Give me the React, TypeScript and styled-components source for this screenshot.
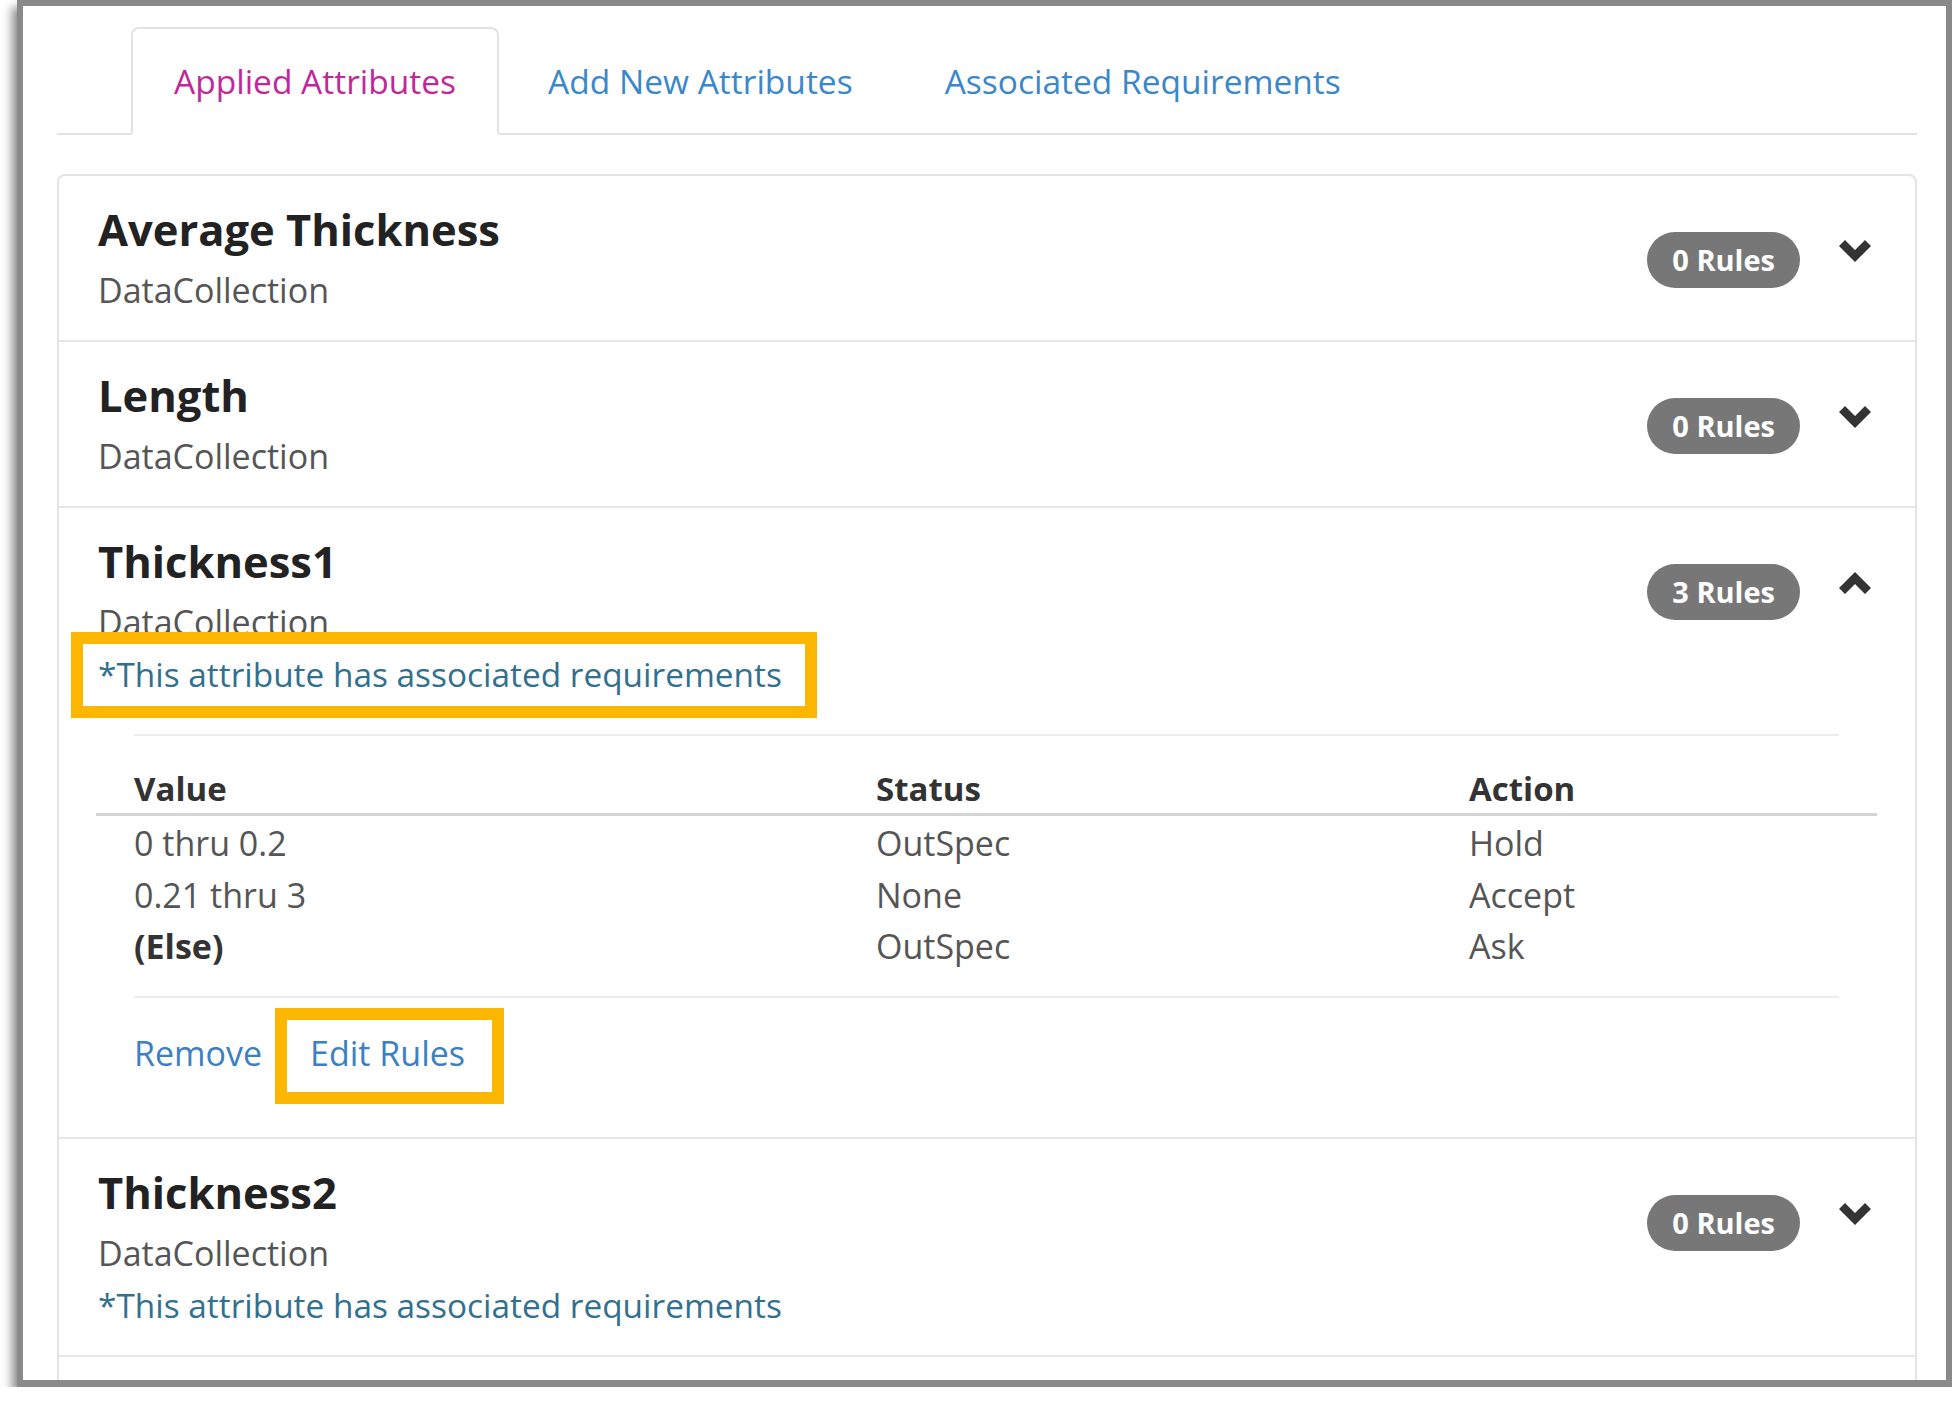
import { FC } from 'react'
import styled, { createGlobalStyle } from 'styled-components'

const GlobalStyle = createGlobalStyle`
  html, body {
    margin: 0;
    padding: 0;
    background: #fff;
  }
  body {
    font-family: 'Open Sans', 'Noto Sans', sans-serif;
    color: #333;
  }
  * {
    box-sizing: border-box;
  }
`

const Frame = styled.div`
  width: 1935px;
  height: 1387px;
  margin-left: 17px;
  border: 6px solid #8a8a8a;
  border-bottom-width: 7px;
  box-shadow: -5px 7px 9px rgba(0, 0, 0, 0.45);
  background: #fff;
  overflow: hidden;
  padding: 21px 29px 0 34px;
`

const TabList = styled.ul`
  display: flex;
  list-style: none;
  margin: 0;
  padding: 0 0 0 74px;
  border-bottom: 2px solid #e2e2e2;
`

const Tab = styled.li<{ $active?: boolean }>`
  margin: 0 6px -2px 0;
  padding: 28px 41px 28px;
  border: 2px solid ${({ $active }) => ($active ? '#e2e2e2' : 'transparent')};
  border-bottom-color: ${({ $active }) => ($active ? '#fff' : 'transparent')};
  border-radius: 8px 8px 0 0;
  background: ${({ $active }) => ($active ? '#fff' : 'transparent')};
  font-size: 33.5px;
  line-height: 48px;
  color: ${({ $active }) => ($active ? '#c0289a' : '#3a87c9')};
  cursor: pointer;
`

const Card = styled.div`
  margin-top: 39px;
  padding-bottom: 80px;
  border: 2px solid #e4e4e4;
  border-radius: 8px;
`

const AttrRow = styled.div`
  padding: 28px 44px 24px 39px;
  border-bottom: 2px solid #e6e6e6;
`

const RowHeader = styled.div`
  display: flex;
  align-items: center;
`

const TitleBlock = styled.div`
  flex: 1;
`

const Title = styled.h4`
  margin: 0;
  font-size: 43.5px;
  line-height: 52px;
  font-weight: 700;
  color: #222;
`

const SubTitle = styled.div`
  margin-top: 8px;
  font-size: 34px;
  line-height: 52px;
  color: #555;
`

const Note = styled.div`
  font-size: 33.4px;
  line-height: 52px;
  color: #31708f;
`

const Badge = styled.span`
  display: inline-block;
  height: 56px;
  line-height: 56px;
  padding: 0 25px;
  border-radius: 28px;
  background: #777;
  color: #fff;
  font-size: 29px;
  font-weight: 700;
`

const Toggle = styled.span<{ $open?: boolean }>`
  display: flex;
  margin: 0 0 18px 39px;
  transform: ${({ $open }) => ($open ? 'rotate(180deg)' : 'none')};
`

const Highlight = styled.span<{ $inset: string }>`
  position: relative;
  display: inline-block;

  &::after {
    content: '';
    position: absolute;
    inset: ${({ $inset }) => $inset};
    border: 12px solid #fdb700;
    pointer-events: none;
  }
`

const Divider = styled.div<{ $top?: number }>`
  height: 2px;
  margin: ${({ $top }) => $top ?? 0}px 32px 0 36px;
  background: #ececec;
`

const RuleGrid = styled.div`
  display: grid;
  grid-template-columns: 742px 593px 1fr;
  margin: 0 -6px 23px -2px;
`

const HeadCell = styled.div`
  padding: 29px 0 0 38px;
  margin-bottom: 2px;
  font-size: 33px;
  line-height: 48px;
  font-weight: 700;
  color: #333;
  border-bottom: 3px solid #d4d4d4;
`

const Cell = styled.div<{ $bold?: boolean }>`
  padding-left: 38px;
  font-size: 34px;
  line-height: 51.5px;
  font-weight: ${({ $bold }) => ($bold ? 700 : 400)};
  color: ${({ $bold }) => ($bold ? '#333' : '#555')};
`

const Actions = styled.div`
  display: flex;
  gap: 48px;
  padding: 29px 0 34px 36px;
`

const ActionLink = styled.a`
  font-size: 34px;
  line-height: 52px;
  color: #3a80c3;
  text-decoration: none;
  cursor: pointer;
`

const Chevron: FC = () => (
  <svg width="32" height="22" viewBox="0 0 32 22">
    <polygon points="0,6 6,0 16,10 26,0 32,6 16,22" fill="#333" />
  </svg>
)

interface Rule {
  value: string
  status: string
  action: string
  isElse?: boolean
}

interface Attribute {
  name: string
  type: string
  rules: Rule[]
  hasRequirements?: boolean
  open?: boolean
}

const attributes: Attribute[] = [
  { name: 'Average Thickness', type: 'DataCollection', rules: [] },
  { name: 'Length', type: 'DataCollection', rules: [] },
  {
    name: 'Thickness1',
    type: 'DataCollection',
    hasRequirements: true,
    open: true,
    rules: [
      { value: '0 thru 0.2', status: 'OutSpec', action: 'Hold' },
      { value: '0.21 thru 3', status: 'None', action: 'Accept' },
      { value: '(Else)', status: 'OutSpec', action: 'Ask', isElse: true },
    ],
  },
  { name: 'Thickness2', type: 'DataCollection', rules: [], hasRequirements: true },
]

const noteText = '*This attribute has associated requirements'

const AttributeRow: FC<{ attr: Attribute }> = ({ attr }) => {
  const note = attr.open ? (
    <Highlight $inset="-16px -35px -18px -27px">{noteText}</Highlight>
  ) : (
    noteText
  )

  return (
    <AttrRow>
      <RowHeader>
        <TitleBlock>
          <Title>{attr.name}</Title>
          <SubTitle>{attr.type}</SubTitle>
        </TitleBlock>
        <Badge>{attr.rules.length} Rules</Badge>
        <Toggle $open={attr.open}>
          <Chevron />
        </Toggle>
      </RowHeader>
      {attr.hasRequirements && <Note>{note}</Note>}
      {attr.open && (
        <>
          <Divider $top={34} />
          <RuleGrid>
            <HeadCell>Value</HeadCell>
            <HeadCell>Status</HeadCell>
            <HeadCell>Action</HeadCell>
            {attr.rules.flatMap((r) => [
              <Cell key={`${r.value}-v`} $bold={r.isElse}>
                {r.value}
              </Cell>,
              <Cell key={`${r.value}-s`}>{r.status}</Cell>,
              <Cell key={`${r.value}-a`}>{r.action}</Cell>,
            ])}
          </RuleGrid>
          <Divider />
          <Actions>
            <ActionLink>Remove</ActionLink>
            <Highlight $inset="-19px -39px -25px -35px">
              <ActionLink>Edit Rules</ActionLink>
            </Highlight>
          </Actions>
        </>
      )}
    </AttrRow>
  )
}

const App: FC = () => {
  return (
    <>
      <GlobalStyle />
      <Frame>
        <TabList>
          <Tab $active>Applied Attributes</Tab>
          <Tab>Add New Attributes</Tab>
          <Tab>Associated Requirements</Tab>
        </TabList>
        <Card>
          {attributes.map((a) => (
            <AttributeRow key={a.name} attr={a} />
          ))}
        </Card>
      </Frame>
    </>
  )
}

export default App
